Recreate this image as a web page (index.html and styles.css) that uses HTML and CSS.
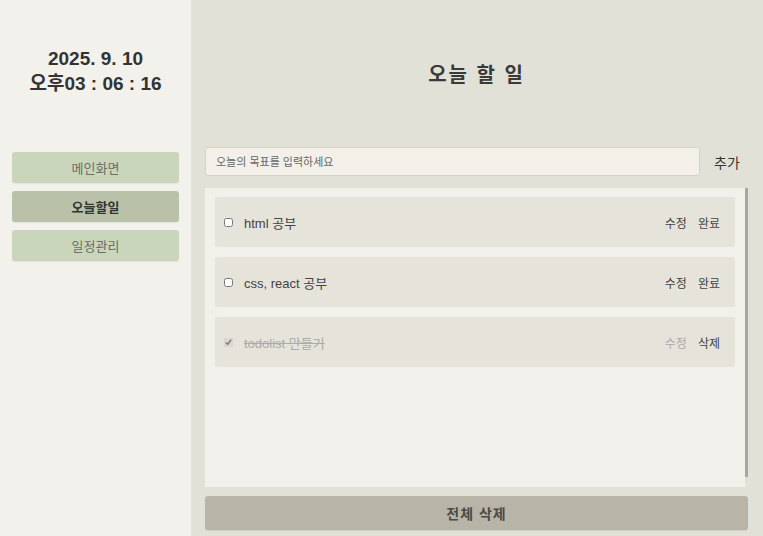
FILE: index.html
```html
<!DOCTYPE html>
<html lang="ko">
<head>
<meta charset="utf-8">
<title>오늘 할 일</title>
<link rel="stylesheet" href="styles.css">
</head>
<body>
<div class="app">
  <aside class="sidebar">
    <div class="clock">
      <div class="clock-date">2025. 9. 10</div>
      <div class="clock-time">오후03 : 06 : 16</div>
    </div>
    <nav class="nav">
      <button class="nav-btn">메인화면</button>
      <button class="nav-btn active">오늘할일</button>
      <button class="nav-btn">일정관리</button>
    </nav>
  </aside>
  <main class="main">
    <h1 class="title">오늘 할 일</h1>
    <div class="add-row">
      <input class="add-input" type="text" placeholder="오늘의 목표를 입력하세요">
      <button class="add-btn">추가</button>
    </div>
    <div class="list">
      <ul class="items">
        <li class="item">
          <input class="check" type="checkbox">
          <span class="item-text">html 공부</span>
          <div class="item-actions">
            <button class="act">수정</button>
            <button class="act">완료</button>
          </div>
        </li>
        <li class="item">
          <input class="check" type="checkbox">
          <span class="item-text">css, react 공부</span>
          <div class="item-actions">
            <button class="act">수정</button>
            <button class="act">완료</button>
          </div>
        </li>
        <li class="item done">
          <input class="check" type="checkbox" checked>
          <span class="item-text">todolist 만들기</span>
          <div class="item-actions">
            <button class="act muted">수정</button>
            <button class="act">삭제</button>
          </div>
        </li>
      </ul>
      <div class="scrollbar"><div class="scroll-thumb"></div></div>
    </div>
    <button class="clear-btn">전체 삭제</button>
  </main>
</div>
</body>
</html>
```

FILE: styles.css
```css
* { box-sizing: border-box; }
html, body { margin: 0; padding: 0; }
body {
  font-family: "Liberation Sans", "Noto Sans CJK KR", sans-serif;
  color: #333;
  background: #e2e1d7;
}
button { font-family: inherit; cursor: pointer; }
.app {
  display: flex;
  height: 536px;
  overflow: hidden;
}
.sidebar {
  width: 191px;
  flex: none;
  background: #f2f1ec;
  padding: 46px 12px 0 12px;
}
.clock {
  text-align: center;
  font-size: 19px;
  font-weight: bold;
  line-height: 25px;
  color: #333;
}
.nav {
  margin-top: 56px;
  display: flex;
  flex-direction: column;
  gap: 8px;
}
.nav-btn {
  height: 31px;
  border: none;
  border-radius: 3px;
  background: #cad6bc;
  color: #6b6e66;
  font-size: 13px;
  box-shadow: 0 1px 1px rgba(0,0,0,0.06);
}
.nav-btn.active {
  background: #b9c2a8;
  color: #333;
  font-weight: bold;
}
.main {
  flex: 1;
  padding: 0 15px 0 14px;
  display: flex;
  flex-direction: column;
}
.title {
  margin: 61px 0 0 0;
  height: 28px;
  line-height: 28px;
  text-align: center;
  font-size: 20px;
  font-weight: bold;
  letter-spacing: 2px;
  color: #3a3a3a;
}
.add-row {
  margin-top: 58px;
  display: flex;
  align-items: center;
}
.add-input {
  flex: 1;
  height: 29px;
  border: 1px solid #d5d2c6;
  border-radius: 3px;
  background: #f3f0ea;
  padding: 0 10px;
  font-family: inherit;
  font-size: 11px;
  color: #333;
  outline: none;
}
.add-input::placeholder { color: #666; }
.add-btn {
  width: 48px;
  height: 29px;
  border: none;
  background: transparent;
  font-size: 14px;
  color: #333;
  padding: 0 0 0 6px;
}
.list {
  margin-top: 12px;
  height: 299px;
  display: flex;
}
.items {
  flex: 1;
  list-style: none;
  margin: 0;
  padding: 9px 10px;
  background: #f1f0eb;
  display: flex;
  flex-direction: column;
  gap: 10px;
}
.scrollbar {
  width: 3px;
  flex: none;
}
.scroll-thumb {
  height: 289px;
  background: #a9a79d;
}
.item {
  height: 50px;
  flex: none;
  background: #e6e3da;
  border-radius: 2px;
  display: flex;
  align-items: center;
  padding: 0 15px 0 9px;
}
.check {
  width: 9px;
  height: 9px;
  margin: 0;
  flex: none;
}
.item.done .check { accent-color: #d2d2d2; opacity: 0.6; }
.item-text {
  margin-left: 11px;
  font-size: 13px;
  color: #444;
  flex: 1;
}
.item.done .item-text {
  color: #aaa;
  text-decoration: line-through;
}
.item-actions {
  display: flex;
  gap: 11px;
}
.act {
  border: none;
  background: transparent;
  padding: 0;
  font-size: 12px;
  color: #444;
}
.act.muted { color: #aaa; }
.clear-btn {
  margin-top: 9px;
  height: 34px;
  border: none;
  border-radius: 3px;
  background: #b8b4a8;
  color: #4b4a45;
  font-size: 14px;
  font-weight: bold;
  letter-spacing: 1px;
  box-shadow: 0 1px 1px rgba(0,0,0,0.08);
}
```
